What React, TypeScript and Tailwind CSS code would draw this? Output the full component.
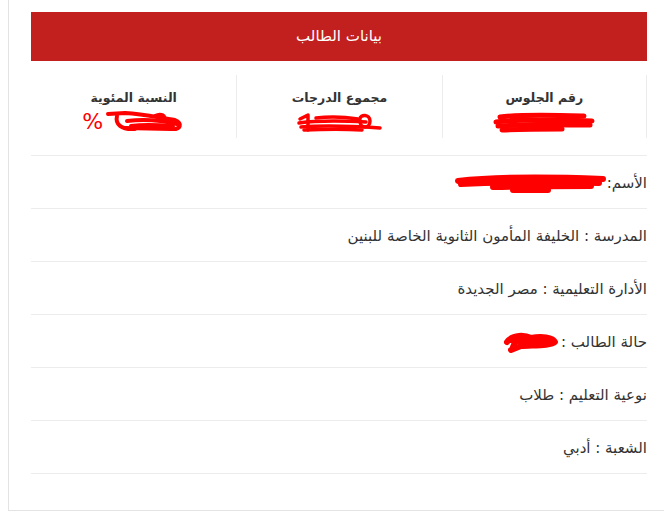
import React from "react";

const font = { fontFamily: '"DejaVu Sans", "Noto Sans", sans-serif' };

// red marker scribble used to hide personal values
const Scribble: React.FC<{ w: number; h: number; paths: string[]; sw?: number }> = ({ w, h, paths, sw = 4 }) => (
  <svg width={w} height={h} viewBox={`0 0 ${w} ${h}`} className="inline-block align-middle">
    {paths.map((d, i) => (
      <path key={i} d={d} fill="none" stroke="#ff0000" strokeWidth={sw} strokeLinecap="round" strokeLinejoin="round" />
    ))}
  </svg>
);

const stats = [
  {
    label: "رقم الجلوس",
    value: (
      <Scribble
        w={104}
        h={22}
        sw={5}
        paths={[
          "M8 6 C30 3 60 4 92 5",
          "M4 11 C30 8 70 9 100 10",
          "M6 15 C35 13 70 14 98 14",
          "M10 19 C30 18 50 18 70 18",
          "M20 8 L85 12",
        ]}
      />
    ),
  },
  {
    label: "مجموع الدرجات",
    value: (
      <Scribble
        w={88}
        h={22}
        sw={3.5}
        paths={[
          "M4 8 L12 4 L12 19",
          "M3 12 C25 9 50 10 70 11",
          "M5 16 C30 14 55 15 84 17",
          "M20 7 C35 5 50 6 62 8",
          "M64 8 C64 3 74 3 74 10 C74 18 64 18 64 10",
          "M8 19 C30 18 50 18 66 19",
        ]}
      />
    ),
  },
  {
    label: "النسبة المئوية",
    value: (
      <span className="inline-flex items-center gap-[2px]">
        <Scribble
          w={80}
          h={24}
          sw={4}
          paths={[
            "M3 4 L20 3 C40 4 55 8 70 10 C78 13 76 20 66 19 L20 18",
            "M12 6 C10 14 16 20 30 19",
            "M22 11 C40 9 55 10 72 14",
            "M26 16 C40 14 55 15 68 16",
            "M50 6 C56 3 62 6 58 10",
          ]}
        />
        <span className="text-[22px] leading-none text-[#ff0000]">%</span>
      </span>
    ),
  },
];

const rows: React.ReactNode[] = [
  <>
    الأسم:
    <Scribble
      w={154}
      h={20}
      sw={6}
      paths={[
        "M5 8 C40 4 100 4 150 6",
        "M8 11 C50 9 100 9 146 10",
        "M40 14 C80 13 110 13 138 13",
        "M60 17 L95 17",
      ]}
    />
  </>,
  "المدرسة : الخليفة المأمون الثانوية الخاصة للبنين",
  "الأدارة التعليمية : مصر الجديدة",
  <>
    حالة الطالب :{" "}
    <Scribble
      w={60}
      h={24}
      sw={6}
      paths={["M6 12 C12 4 24 5 30 8 C40 6 52 7 54 12 C50 16 30 15 20 16 L10 20", "M10 10 C20 12 35 11 50 11", "M16 8 L12 17"]}
    />
  </>,
  "نوعية التعليم : طلاب",
  "الشعبة : أدبي",
];

export default function App() {
  return (
    <div className="h-[526px] w-[664px] overflow-hidden bg-white pl-[8px]" style={font}>
      <div className="h-[511px] border-b border-l border-[#e3e3e3] pl-[22px] pr-[17px] pt-[12px]">
        <div className="flex h-[49px] items-center justify-center bg-[#c21f1f] text-[15px] text-white" dir="rtl">
          بيانات الطالب
        </div>

        <div className="mt-[14px] grid h-[63px] grid-cols-3" dir="rtl">
          {stats.map((s) => (
            <div key={s.label} className="flex flex-col items-center border-l border-[#ececec] pt-[13px] first:border-r last:border-l-0">
              <div className="text-[12.5px] font-bold leading-[20px] text-[#333]">{s.label}</div>
              <div className="mt-[2px] flex h-[24px] items-center">{s.value}</div>
            </div>
          ))}
        </div>

        <div className="mt-[17px] border-t border-[#ececec]" dir="rtl">
          {rows.map((r, i) => (
            <div key={i} className="flex h-[53px] items-center border-b border-[#ececec] pt-[2px] text-[15px] text-[#333]">
              {r}
            </div>
          ))}
        </div>
      </div>
    </div>
  );
}
